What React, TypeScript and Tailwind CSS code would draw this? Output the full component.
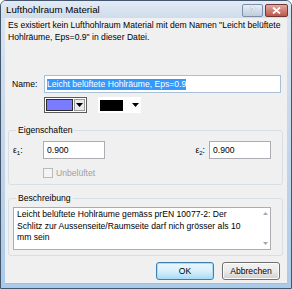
import React from "react";

const font = { fontFamily: '"Liberation Sans", Arial, sans-serif' };

function Arrow({ className = "" }: { className?: string }) {
  return (
    <svg width="7" height="4" viewBox="0 0 7 4" className={className}>
      <path d="M0 0 H7 L3.5 4 Z" fill="#000" />
    </svg>
  );
}

function Eps({ n }: { n: string }) {
  return (
    <span className="inline-flex items-end">
      <span>ε</span>
      <span className="text-[6px] leading-[6px]">{n}</span>
      <span>:</span>
    </span>
  );
}

function Group({ label, className, children }: { label: string; className: string; children: React.ReactNode }) {
  return (
    <div className={`relative ml-[3px] w-[275px] border border-[#d5dfe5] rounded-[3px] ${className}`}>
      <span className="absolute left-[7px] top-[-7px] px-[2px] bg-[#f0f0f0] leading-[12px]">{label}</span>
      {children}
    </div>
  );
}

export default function App() {
  return (
    <div
      className="w-[292px] h-[289px] flex flex-col bg-gradient-to-b from-[#d9e5f2] via-[#c4d6ea] to-[#a9cbe9] border border-[#44566b] rounded-t-[6px] text-[8.6px] leading-[12px] text-black overflow-hidden"
      style={font}
    >
      {/* Title bar */}
      <div className="h-[17px] shrink-0 flex items-center pl-[5px] pr-[3px] bg-gradient-to-b from-[#e2ebf6] to-[#cfdcec]">
        <span className="text-[9.7px] leading-[12px] mt-[1px]">Lufthohlraum Material</span>
        <div className="ml-auto flex gap-[2px] mt-[1px]">
          <div
            className="w-[21px] h-[13px] rounded-[2px] border border-[#7d8fa6] bg-gradient-to-b from-[#e8eef6] to-[#bccde1] flex items-center justify-center text-[9px] leading-[9px] font-bold text-[#fdfdfd]"
            style={{ textShadow: "0 0 1px #5a6f8a" }}
          >
            ?
          </div>
          <div className="w-[23px] h-[13px] rounded-[2px] border border-[#6e3a35] bg-gradient-to-b from-[#e3a89f] to-[#c0544b] flex items-center justify-center">
            <svg width="9" height="7" viewBox="0 0 9 7">
              <path d="M1 0.5 L8 6.5 M8 0.5 L1 6.5" stroke="#fff" strokeWidth="1.8" />
            </svg>
          </div>
        </div>
      </div>

      {/* Client */}
      <div className="flex-1 mx-[4px] mb-[4px] bg-[#f0f0f0] flex flex-col border-b border-[#8fc7ea]">
        <div className="pl-[3px] pt-[1px]">
          <div>Es existiert kein Lufthohlraum Material mit dem Namen "Leicht belüftete</div>
          <div>Hohlräume, Eps=0.9" in dieser Datei.</div>
        </div>

        {/* Name row */}
        <div className="flex items-center mt-[32px] h-[18px]">
          <span className="pl-[7px] w-[39px]">Name:</span>
          <div className="w-[237px] h-[18px] bg-white border border-[#a9bfd6] flex items-center pl-[2px]">
            <span className="bg-[#3399ff] text-white leading-[11px]">Leicht belüftete Hohlräume, Eps=0.9</span>
          </div>
        </div>

        {/* Color combos */}
        <div className="flex mt-[4px] pl-[39px] gap-[11px] h-[16px]">
          <div className="w-[43px] h-[16px] border border-[#5b5b5b] bg-white flex items-center p-[1px] gap-[1px]">
            <div className="flex-1 h-full bg-[#7b7bff] border border-[#2b2b2b]" />
            <div className="w-[11px] h-full bg-[#e9e9e9] border border-[#9a9a9a] flex items-center justify-center">
              <Arrow />
            </div>
          </div>
          <div className="w-[43px] h-[16px] bg-white flex items-center p-[2px] gap-[3px]">
            <div className="w-[23px] h-[11px] bg-black" />
            <Arrow className="ml-[6px]" />
          </div>
        </div>

        {/* Eigenschaften */}
        <Group label="Eigenschaften" className="mt-[17px] h-[55px] pt-[10px]">
          <div className="flex items-center h-[18px]">
            <span className="pl-[4px] w-[34px]">
              <Eps n="1" />
            </span>
            <div className="w-[62px] h-[18px] bg-white border border-[#abadb3] flex items-center pl-[3px]">0.900</div>
            <span className="ml-auto mr-[4px]">
              <Eps n="2" />
            </span>
            <div className="w-[62px] h-[18px] bg-white border border-[#abadb3] flex items-center pl-[3px] mr-[11px]">0.900</div>
          </div>
          <div className="flex items-center mt-[8px] pl-[34px] gap-[3px] h-[12px] text-[#a0a0a0]">
            <div className="w-[10px] h-[10px] border border-[#b9b9b9] bg-[#f4f4f4]" />
            <span>Unbelüftet</span>
          </div>
        </Group>

        {/* Beschreibung */}
        <Group label="Beschreibung" className="mt-[13px] h-[58px] pt-[8px]">
          <div className="ml-[4px] w-[258px] h-[43px] bg-white border border-[#abadb3] flex">
            <div className="flex-1 pl-[3px] pt-[1px] leading-[11.5px]">
              <div>Leicht belüftete Hohlräume gemäss prEN 10077-2: Der</div>
              <div>Schlitz zur Aussenseite/Raumseite darf nich grösser als 10</div>
              <div>mm sein</div>
            </div>
            <div className="w-[10px] flex flex-col justify-between items-center py-[4px]">
              <svg width="5" height="3" viewBox="0 0 5 3">
                <path d="M0 3 H5 L2.5 0 Z" fill="#a7a7a7" />
              </svg>
              <svg width="5" height="3" viewBox="0 0 5 3">
                <path d="M0 0 H5 L2.5 3 Z" fill="#a7a7a7" />
              </svg>
            </div>
          </div>
        </Group>

        {/* Buttons */}
        <div className="flex justify-end gap-[8px] mt-[6px] pr-[7px]">
          <div className="w-[58px] h-[18px] rounded-[3px] border border-[#3c7fb1] bg-gradient-to-b from-[#eaf6fd] via-[#d9f0fc] to-[#a7d9f5] flex items-center justify-center shadow-[inset_0_0_0_1px_#a9dcf6]">
            OK
          </div>
          <div className="w-[58px] h-[18px] rounded-[3px] border border-[#707070] bg-gradient-to-b from-[#f2f2f2] via-[#ebebeb] to-[#cfcfcf] flex items-center justify-center shadow-[inset_0_0_0_1px_#fcfcfc]">
            Abbrechen
          </div>
        </div>
      </div>
    </div>
  );
}
